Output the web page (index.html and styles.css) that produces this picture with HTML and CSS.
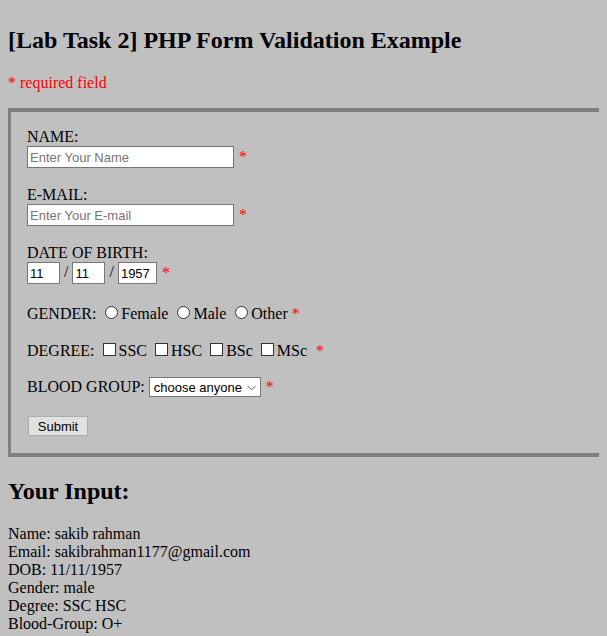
FILE: index.html
```html
<!DOCTYPE html>
<html>
<head>
<meta charset="utf-8">
<title>PHP Form Validation</title>
<link rel="stylesheet" href="styles.css">
</head>
<body>
<h2 class="title">[Lab Task 2] PHP Form Validation Example</h2>
<p class="req">* required field</p>
<form class="box">
  <div class="label">NAME:</div>
  <div class="row field"><input class="text wide" type="text" placeholder="Enter Your Name"><span class="star fstar">*</span></div>
  <div class="label">E-MAIL:</div>
  <div class="row field"><input class="text wide" type="text" placeholder="Enter Your E-mail"><span class="star fstar">*</span></div>
  <div class="label">DATE OF BIRTH:</div>
  <div class="row dob"><input class="text dd" type="text" value="11"><span class="slash">/</span><input class="text dd" type="text" value="11"><span class="slash">/</span><input class="text yy" type="text" value="1957"><span class="star fstar">*</span></div>
  <div class="line">GENDER: <input class="radio" type="radio" name="g">Female <input class="radio" type="radio" name="g">Male <input class="radio" type="radio" name="g">Other <span class="star">*</span></div>
  <div class="line">DEGREE: <input class="check" type="checkbox">SSC <input class="check" type="checkbox">HSC <input class="check" type="checkbox">BSc <input class="check" type="checkbox">MSc <span class="star gap">*</span></div>
  <div class="blood"><span class="blabel">BLOOD GROUP:</span><span class="selwrap"><select class="sel"><option>choose anyone</option></select><svg class="chev" width="9" height="6" viewBox="0 0 9 6"><path d="M0.5 0.8 L4.5 4.8 L8.5 0.8" fill="none" stroke="#555" stroke-width="1"/></svg></span><span class="star fstar">*</span></div>
  <button class="submit" type="button">Submit</button>
</form>
<h2 class="title out-title">Your Input:</h2>
<div class="output">
Name: sakib rahman<br>
Email: sakibrahman1177@gmail.com<br>
DOB: 11/11/1957<br>
Gender: male<br>
Degree: SSC HSC<br>
Blood-Group: O+
</div>
</body>
</html>
```

FILE: styles.css
```css
html {
  overflow: hidden;
  background: #c0c0c0;
}
body {
  margin: 8px;
  background: #c0c0c0;
  font-family: "Liberation Serif", "Times New Roman", serif;
  font-size: 16px;
  color: #000;
}
.title {
  font-size: 24px;
  font-weight: bold;
  margin: 19px 0 20px;
  line-height: 27px;
}
.req {
  color: #ff0000;
  margin: 0 0 16px;
  line-height: 18px;
}
.box {
  display: block;
  width: 640px;
  border: 4px solid #808080;
  padding: 16px 15px 17px;
  margin: 0 0 0 -1px;
  padding-left: 16px;
}
.label {
  line-height: 18px;
  height: 18px;
}
.row {
  display: flex;
  align-items: center;
  height: 22px;
}
.field {
  margin-bottom: 18px;
}
.dob {
  margin-bottom: 19px;
}
.slash {
  padding: 0 4px;
  margin-top: -2px;
}
.line {
  line-height: 18px;
  height: 18px;
  margin-bottom: 19px;
  white-space: nowrap;
}
.blood {
  display: flex;
  align-items: center;
  height: 20px;
  margin-bottom: 19px;
}
.blabel {
  margin-right: 4px;
}
.star {
  color: #ff0000;
}
.fstar {
  margin-left: 5px;
}
.gap {
  margin-left: 5px;
}
.text {
  box-sizing: border-box;
  height: 22px;
  border: 1px solid #767676;
  background: #fff;
  padding: 1px 2px;
  margin: 0;
  font-family: "Liberation Sans", Arial, sans-serif;
  font-size: 13px;
  color: #000;
  outline: none;
}
.text::placeholder {
  color: #757575;
}
.wide { width: 207px; }
.dd { width: 33px; }
.yy { width: 39px; }
.radio {
  appearance: none;
  -webkit-appearance: none;
  box-sizing: border-box;
  width: 13px;
  height: 13px;
  margin: 3px 3px 0 5px;
  border: 1px solid #333;
  border-radius: 50%;
  background: #fff;
  vertical-align: 0;
}
.check {
  appearance: none;
  -webkit-appearance: none;
  box-sizing: border-box;
  width: 13px;
  height: 13px;
  margin: 3px 3px 3px 4px;
  border: 1px solid #333;
  border-radius: 0;
  background: #fff;
  vertical-align: -3px;
}
.selwrap {
  position: relative;
  display: inline-block;
  height: 20px;
}
.sel {
  appearance: none;
  -webkit-appearance: none;
  box-sizing: border-box;
  width: 112px;
  height: 20px;
  border: 1px solid #767676;
  border-radius: 0;
  background: #fff;
  padding: 0 0 0 4px;
  margin: 0;
  font-family: "Liberation Sans", Arial, sans-serif;
  font-size: 13px;
  color: #000;
}
.chev {
  position: absolute;
  right: 5px;
  top: 8px;
  pointer-events: none;
}
.submit {
  display: block;
  box-sizing: border-box;
  width: 60px;
  height: 20px;
  margin: 0 0 0 1px;
  padding: 0;
  border: 1px solid #adadad;
  background: #e1e1e1;
  font-family: "Liberation Sans", Arial, sans-serif;
  font-size: 13px;
  color: #000;
}
.out-title {
  margin: 21px 0 20px;
}
.output {
  line-height: 18px;
}
```
